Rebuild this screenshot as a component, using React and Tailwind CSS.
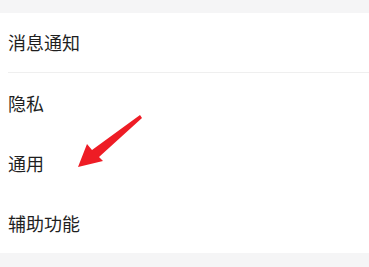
export default function App() {
  const items = ['消息通知', '隐私', '通用', '辅助功能'];
  return (
    <div
      className="relative w-[369px] h-[267px] bg-[#f5f5f6] pt-[13px] overflow-hidden"
      style={{ fontFamily: '"Noto Sans CJK SC", "Noto Sans", sans-serif' }}
    >
      <div className="bg-white">
        {items.map((t, i) => (
          <div key={t} className="pl-2">
            <div
              className={`h-[60px] flex items-center text-[18px] text-[#1f1f1f] ${i === 0 ? 'border-b border-[#efefef] h-[59px]' : ''}`}
            >
              {t}
            </div>
          </div>
        ))}
      </div>
      {/* red arrow */}
      <svg className="absolute left-0 top-0" width="369" height="267" viewBox="0 0 369 267">
        <polygon
          points="140,115 142,118 99,157 103,161 78,167 87,144 92,150"
          fill="#ee1c25"
        />
      </svg>
    </div>
  );
}
